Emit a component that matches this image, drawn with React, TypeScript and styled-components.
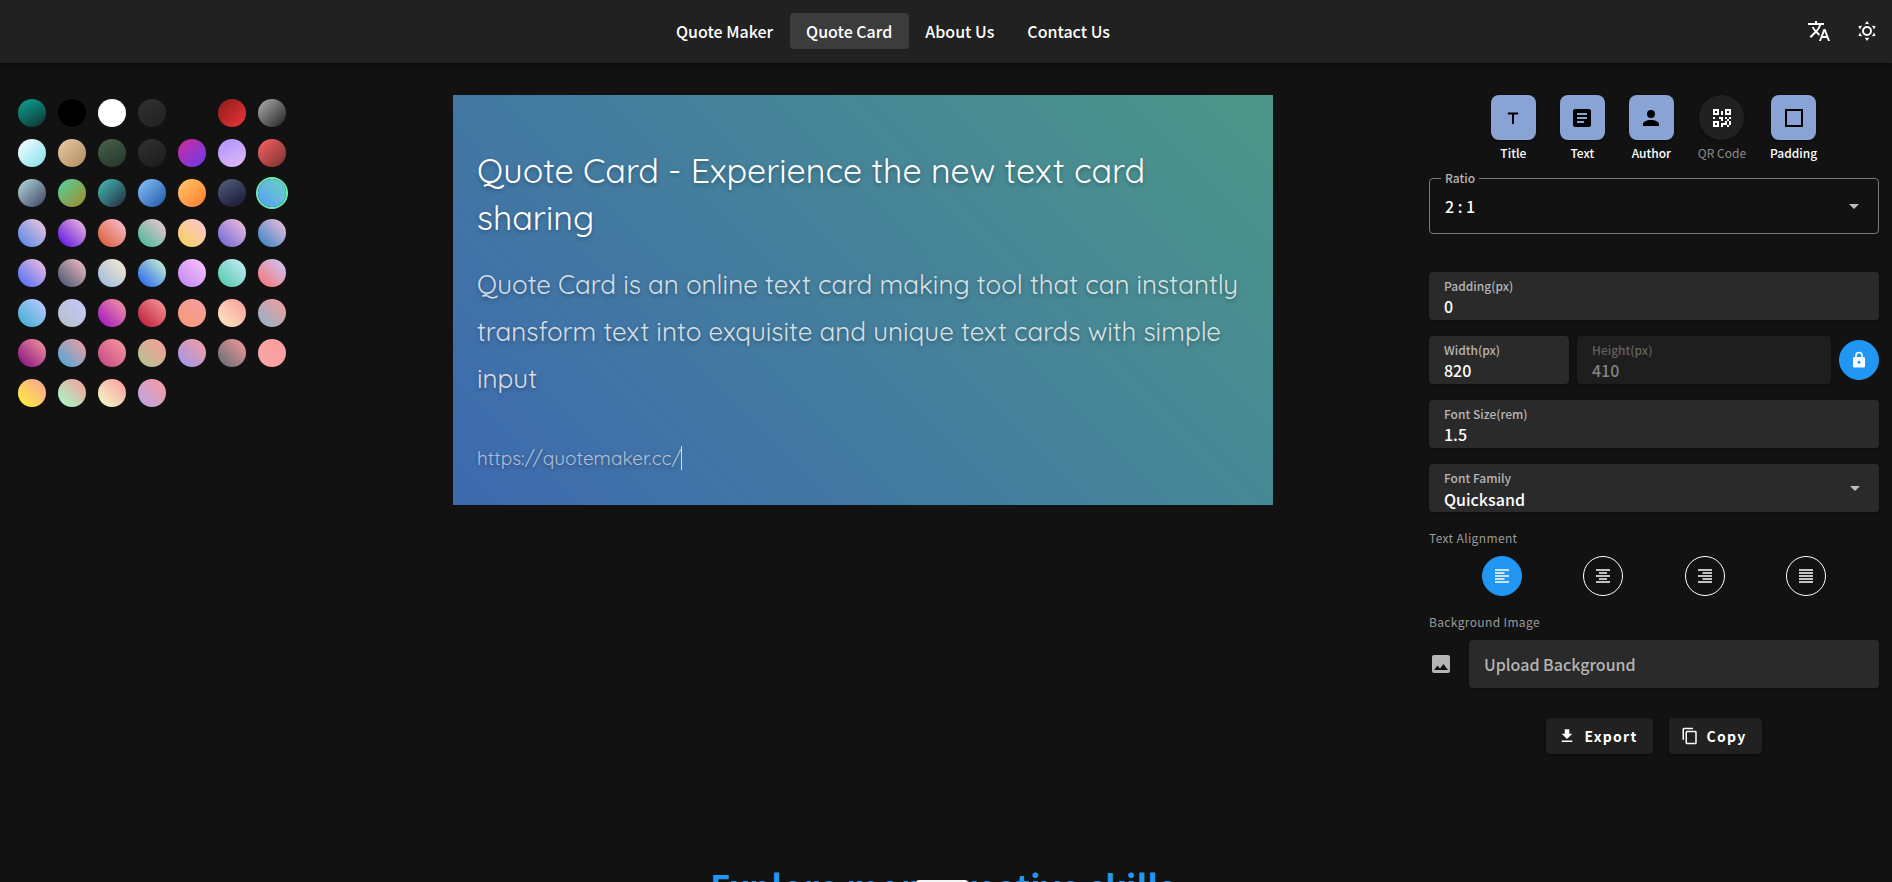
import React from "react";
import styled, { createGlobalStyle } from "styled-components";

const GlobalStyle = createGlobalStyle`
  * { box-sizing: border-box; }
  body {
    margin: 0;
    background: #121212;
    color: #fff;
    font-family: "Noto Sans CJK SC", "Noto Sans", sans-serif;
    font-size: 16px;
    font-weight: 500;
  }
  button, input, select { font: inherit; color: inherit; }
  h1, h2, p { margin: 0; }
`;

const Page = styled.div`
  height: 100vh;
  overflow: hidden;
`;

const Header = styled.header`
  position: relative;
  display: flex;
  align-items: center;
  height: 63px;
  padding-right: 1px;
  border-bottom: 1px solid #212121;
  background: #212121;
  box-shadow: 0 2px 5px rgba(0, 0, 0, 0.5);
`;

const Nav = styled.nav`
  flex: 1;
  display: flex;
  justify-content: center;
`;

const NavLink = styled.a<{ $active?: boolean }>`
  height: 36px;
  padding: 0 17px 0 16px;
  border-radius: 4px;
  line-height: 36px;
  color: #fff;
  text-decoration: none;
  background: ${(p) => (p.$active ? "#3c3c3c" : "transparent")};
`;

const HeaderActions = styled.div`
  display: flex;
  margin-left: 8px;
`;

const IconButton = styled.button`
  display: grid;
  place-items: center;
  width: 48px;
  height: 48px;
  padding: 0;
  border: 0;
  border-radius: 50%;
  background: none;
`;

const Workspace = styled.main`
  display: grid;
  grid-template-columns: 307px minmax(0, 1fr) 25%;
  align-items: start;
  padding-top: 32px;
`;

const Palette = styled.div`
  display: grid;
  grid-template-columns: repeat(7, 28px);
  gap: 12px;
  padding: 4px 0 0 18px;
`;

const Swatch = styled.button<{ $fill: string; $selected: boolean }>`
  width: 28px;
  height: 28px;
  padding: 0;
  border: 0;
  border-radius: 50%;
  background: ${(p) => p.$fill};
  box-shadow: ${(p) => (p.$selected ? "0 0 0 2px #69f0ae" : "none")};
`;

const Stage = styled.section`
  display: flex;
  justify-content: center;
`;

const Card = styled.article`
  width: 820px;
  min-height: 410px;
  padding: 52px 24px 24px;
  background: linear-gradient(45deg, #3d69b0, #4c9788);
  font-family: Quicksand, Lato, sans-serif;
  font-weight: 400;
  text-shadow: 0 2px 4px rgba(0, 0, 0, 0.3);
`;

const CardTitle = styled.h1`
  font-size: 34px;
  font-weight: 400;
  line-height: 47px;
`;

const CardText = styled.p`
  margin-top: 20px;
  font-size: 26px;
  line-height: 47px;
  color: rgba(255, 255, 255, 0.8);
`;

const CardAuthor = styled.p`
  display: flex;
  align-items: center;
  margin-top: 44px;
  font-size: 19px;
  line-height: 24px;
  color: rgba(255, 255, 255, 0.6);
`;

const TextCaret = styled.span`
  width: 1px;
  height: 24px;
  background: rgba(255, 255, 255, 0.75);
`;

const Tools = styled.aside`
  display: flex;
  flex-direction: column;
  padding: 0 13px 0 10px;
`;

const Toggles = styled.div`
  display: flex;
  justify-content: center;
  gap: 24px;
`;

const Toggle = styled.label<{ $on: boolean }>`
  display: flex;
  flex-direction: column;
  align-items: center;
  gap: 3px;
  font-size: 12px;
  font-weight: ${(p) => (p.$on ? 500 : 400)};
  line-height: 20px;
  color: ${(p) => (p.$on ? "#fff" : "#8a8a8a")};
`;

const ToggleButton = styled.button<{ $on: boolean }>`
  display: grid;
  place-items: center;
  width: 45px;
  height: 45px;
  padding: 0;
  border: 0;
  border-radius: ${(p) => (p.$on ? "8px" : "50%")};
  background: ${(p) => (p.$on ? "#89a4d4" : "#212121")};
  color: ${(p) => (p.$on ? "#000" : "#fff")};
  box-shadow: 0 1px 3px rgba(0, 0, 0, 0.4);
`;

const OutlinedField = styled.fieldset`
  position: relative;
  height: 64px;
  margin: 7px 0 38px;
  padding: 0;
  border: 1px solid #7a7a7a;
  border-radius: 4px;
`;

const Legend = styled.legend`
  margin-left: 11px;
  padding: 0 4px;
  font-size: 12px;
  line-height: 16px;
  color: #b5b5b5;
`;

const OutlinedSelect = styled.select`
  width: 100%;
  height: 40px;
  padding: 0 15px;
  border: 0;
  background: transparent;
  appearance: none;
`;

const CaretSlot = styled.span`
  position: absolute;
  right: 12px;
  top: 50%;
  display: flex;
  margin-top: -12px;
  color: #bdbdbd;
  pointer-events: none;
`;

const FieldStack = styled.div`
  display: flex;
  flex-direction: column;
  gap: 16px;
`;

const SizeRow = styled.div`
  display: grid;
  grid-template-columns: 140px 1fr 40px;
  align-items: center;
  gap: 8px;
`;

const FilledField = styled.label<{ $disabled?: boolean }>`
  position: relative;
  display: flex;
  flex-direction: column;
  height: 48px;
  padding-top: 5px;
  border-radius: 4px;
  background: ${(p) => (p.$disabled ? "#1e1e1e" : "#2a2a2a")};
  box-shadow: 0 1px 3px rgba(0, 0, 0, 0.4);
  color: ${(p) => (p.$disabled ? "#828282" : "#fff")};
`;

const FieldLabel = styled.span<{ $disabled?: boolean }>`
  padding: 0 15px;
  font-size: 12px;
  line-height: 18px;
  color: ${(p) => (p.$disabled ? "#616161" : "#b5b5b5")};
`;

const FieldInput = styled.input`
  width: 100%;
  height: 22px;
  padding: 0 15px;
  border: 0;
  outline: 0;
  background: transparent;
`;

const FieldSelect = styled.select`
  width: 100%;
  height: 22px;
  padding: 0 15px;
  border: 0;
  background: transparent;
  appearance: none;
`;

const RoundButton = styled.button<{ $on: boolean }>`
  display: grid;
  place-items: center;
  width: 40px;
  height: 40px;
  padding: 0;
  border: 1px solid ${(p) => (p.$on ? "#2196f3" : "#fff")};
  border-radius: 50%;
  background: ${(p) => (p.$on ? "#2196f3" : "transparent")};
`;

const SectionLabel = styled.div`
  margin-top: 16px;
  font-size: 12px;
  font-weight: 400;
  line-height: 20px;
  letter-spacing: 0.03em;
  color: #9a9a9a;
`;

const AlignRow = styled.div`
  display: flex;
  justify-content: space-between;
  margin-top: 8px;
  padding: 0 53px;
`;

const AlignIcon = styled.span`
  display: flex;
  color: rgba(255, 255, 255, 0.75);
`;

const UploadRow = styled.div`
  display: flex;
  align-items: center;
  gap: 16px;
  margin-top: 8px;
  color: #b5b5b5;
`;

const UploadButton = styled.button`
  flex: 1;
  height: 48px;
  padding: 0 15px;
  border: 0;
  border-radius: 4px;
  background: #2a2a2a;
  box-shadow: 0 1px 3px rgba(0, 0, 0, 0.4);
  text-align: left;
`;

const Actions = styled.div`
  display: flex;
  justify-content: center;
  gap: 16px;
  margin-top: 30px;
`;

const ActionButton = styled.button`
  display: flex;
  align-items: center;
  gap: 8px;
  height: 36px;
  padding: 0 15px 0 12px;
  border: 0;
  border-radius: 4px;
  background: #212121;
  box-shadow: 0 1px 3px rgba(0, 0, 0, 0.5);
  font-size: 14px;
  font-weight: 700;
  letter-spacing: 0.09em;
`;

const Explore = styled.section`
  padding-top: 104px;
  text-align: center;
`;

const ExploreTitle = styled.h2`
  padding-right: 6px;
  font-size: 34px;
  font-weight: 700;
  line-height: 56px;
  letter-spacing: 0.007em;
  color: #2196f3;
`;

const SheetHandle = styled.div`
  position: fixed;
  bottom: -4px;
  left: 50%;
  width: 52px;
  height: 6px;
  margin-left: -30px;
  border-radius: 4px;
  background: #f5f5f5;
`;

const paths = {
  translate:
    "M12.87,15.07L10.33,12.56L10.36,12.53C12.1,10.59 13.34,8.36 14.07,6H17V4H10V2H8V4H1V6H12.17C11.5,7.92 10.44,9.75 9,11.35C8.07,10.32 7.3,9.19 6.69,8H4.69C5.42,9.63 6.42,11.17 7.67,12.56L2.58,17.58L4,19L9,14L12.11,17.11L12.87,15.07M18.5,10H16.5L12,22H14L15.12,19H19.87L21,22H23L18.5,10M15.88,17L17.5,12.67L19.12,17H15.88Z",
  sunny:
    "M12,7A5,5 0 0,1 17,12A5,5 0 0,1 12,17A5,5 0 0,1 7,12A5,5 0 0,1 12,7M12,9A3,3 0 0,0 9,12A3,3 0 0,0 12,15A3,3 0 0,0 15,12A3,3 0 0,0 12,9M12,2L14.39,5.42C13.65,5.15 12.84,5 12,5C11.16,5 10.35,5.15 9.61,5.42L12,2M3.34,7L7.5,6.65C6.9,7.16 6.36,7.78 5.94,8.5C5.5,9.24 5.25,10 5.11,10.79L3.34,7M3.36,17L5.12,13.23C5.26,14 5.53,14.78 5.95,15.5C6.37,16.24 6.91,16.86 7.5,17.37L3.36,17M20.65,7L18.88,10.79C18.74,10 18.47,9.23 18.05,8.5C17.63,7.78 17.1,7.15 16.5,6.64L20.65,7M20.64,17L16.5,17.36C17.09,16.85 17.62,16.22 18.04,15.5C18.46,14.77 18.73,14 18.87,13.21L20.64,17M12,22L9.59,18.56C10.33,18.83 11.14,19 12,19C12.82,19 13.63,18.83 14.37,18.56L12,22Z",
  title: "M6.8,6.5H17.2V8.5H13V18H11V8.5H6.8Z",
  text: "M14,17H7V15H14M17,13H7V11H17M17,9H7V7H17M19,3H5C3.89,3 3,3.89 3,5V19A2,2 0 0,0 5,21H19A2,2 0 0,0 21,19V5C21,3.89 20.1,3 19,3Z",
  author:
    "M12,4A4,4 0 0,1 16,8A4,4 0 0,1 12,12A4,4 0 0,1 8,8A4,4 0 0,1 12,4M12,14C16.42,14 20,15.79 20,18V20H4V18C4,15.79 7.58,14 12,14Z",
  qrcode:
    "M3,11H5V13H3V11M11,5H13V9H11V5M9,11H13V15H11V13H9V11M15,11H17V13H19V11H21V13H19V15H21V19H19V21H17V19H13V21H11V17H15V15H17V13H15V11M19,19V15H17V19H19M15,3H21V9H15V3M17,5V7H19V5H17M3,3H9V9H3V3M5,5V7H7V5H5M3,15H9V21H3V15M5,17V19H7V17H5Z",
  square: "M3,3H21V21H3V3M5,5V19H19V5H5Z",
  lock: "M12,17A2,2 0 0,0 14,15C14,13.89 13.1,13 12,13A2,2 0 0,0 10,15A2,2 0 0,0 12,17M18,8A2,2 0 0,1 20,10V20A2,2 0 0,1 18,22H6A2,2 0 0,1 4,20V10C4,8.89 4.9,8 6,8H7V6A5,5 0 0,1 12,1A5,5 0 0,1 17,6V8H18M12,3A3,3 0 0,0 9,6V8H15V6A3,3 0 0,0 12,3Z",
  left: "M5,5H19V7H5ZM5,8H14.5V10H5ZM5,11H19V13H5ZM5,14H14.5V16H5ZM5,17H19V19H5Z",
  center: "M5,5H19V7H5ZM8,8H16V10H8ZM5,11H19V13H5ZM8,14H16V16H8ZM5,17H19V19H5Z",
  right: "M5,5H19V7H5ZM9.5,8H19V10H9.5ZM5,11H19V13H5ZM9.5,14H19V16H9.5ZM5,17H19V19H5Z",
  justify: "M5,5H19V7H5ZM5,8H19V10H5ZM5,11H19V13H5ZM5,14H19V16H5ZM5,17H19V19H5Z",
  image:
    "M8.5,13.5L11,16.5L14.5,12L19,18H5M21,19V5C21,3.89 20.1,3 19,3H5A2,2 0 0,0 3,5V19A2,2 0 0,0 5,21H19A2,2 0 0,0 21,19Z",
  download: "M5,20H19V18H5M19,9H15V3H9V9H5L12,16L19,9Z",
  copy: "M19,21H8V7H19M19,5H8A2,2 0 0,0 6,7V21A2,2 0 0,0 8,23H19A2,2 0 0,0 21,21V7A2,2 0 0,0 19,5M16,1H4A2,2 0 0,0 2,3V17H4V3H16V1Z",
  caret: "M7,10L12,15L17,10H7Z",
};

type IconName = keyof typeof paths;

const Icon = ({ name, size = 24 }: { name: IconName; size?: number }) => (
  <svg width={size} height={size} viewBox="0 0 24 24" fill="currentColor" aria-hidden="true">
    <path d={paths[name]} />
  </svg>
);

const g = (angle: number, from: string, to: string) => `linear-gradient(${angle}deg, ${from}, ${to})`;

const swatches = [
  g(150, "#0ba595", "#12302f"), "#000", "#fff", g(150, "#323232", "#202020"), "transparent", g(135, "#8a1a1a", "#ef3639"), g(135, "#b0b0b0", "#202020"),
  g(135, "#ffffff", "#7ddfea"), g(135, "#e8cba8", "#af8b5c"), g(150, "#4a624c", "#22352a"), g(150, "#313131", "#1b1b1b"), g(135, "#cf2c98", "#673bf0"), g(150, "#ab93fc", "#e4b9f8"), g(135, "#fd6264", "#77302f"),
  g(135, "#b4dbe0", "#3e4060"), g(135, "#53d3a0", "#a48828"), g(135, "#46bdbb", "#24283b"), g(135, "#8cc2fb", "#1d56a8"), g(135, "#ffca6c", "#ff7b2c"), g(150, "#556080", "#15152e"), g(45, "#579af9", "#6cd5c2"),
  g(45, "#4a84ec", "#fac8dc"), g(45, "#5208e0", "#fac1dd"), g(45, "#d4572a", "#fdc4da"), g(45, "#3bb797", "#fac6d2"), g(45, "#f4d24e", "#ffc5e0"), g(45, "#6464d4", "#fac1dd"), g(45, "#2c80c4", "#fac1dd"),
  g(45, "#4568fa", "#fac3dc"), g(45, "#3d506c", "#fac1c8"), g(45, "#96b7e2", "#fdeccb"), g(45, "#1a5cf0", "#d5fbd0"), g(45, "#bd82f0", "#ffc8ff"), g(45, "#4ac5a4", "#cdeeff"), g(45, "#fb706e", "#c8cbff"),
  g(45, "#35add2", "#c8caff"), g(45, "#b0c2c4", "#cac6ff"), g(45, "#9a0ec4", "#fa9e9c"), g(45, "#b81436", "#fa9e9c"), g(45, "#f89878", "#f4a0a0"), g(45, "#ffebc4", "#fa9c9c"), g(45, "#8ab4ce", "#fa9a96"),
  g(45, "#800884", "#fa9c9c"), g(45, "#42a8dc", "#fa9c9c"), g(45, "#c24186", "#fa9e9c"), g(45, "#b2c490", "#fa9c98"), g(45, "#9a98f0", "#fa9c9c"), g(45, "#5c6a70", "#fa9c9c"), g(45, "#f8a8a8", "#fa9c9c"),
  g(45, "#fff736", "#fa9c9c"), g(45, "#a0ffcc", "#fa9a98"), g(45, "#f2ffcc", "#fa9a9c"), g(45, "#b8a6e8", "#fa9a9c"),
];

const toggles: { label: string; icon: IconName; on: boolean }[] = [
  { label: "Title", icon: "title", on: true },
  { label: "Text", icon: "text", on: true },
  { label: "Author", icon: "author", on: true },
  { label: "QR Code", icon: "qrcode", on: false },
  { label: "Padding", icon: "square", on: true },
];

const navItems = ["Quote Maker", "Quote Card", "About Us", "Contact Us"];
const alignments: IconName[] = ["left", "center", "right", "justify"];

export default function App() {
  const [selected, setSelected] = React.useState(20);
  const [align, setAlign] = React.useState<IconName>("left");

  return (
    <Page>
      <GlobalStyle />
      <Header>
        <Nav>
          {navItems.map((item) => (
            <NavLink key={item} href="#" $active={item === "Quote Card"}>{item}</NavLink>
          ))}
        </Nav>
        <HeaderActions>
          <IconButton aria-label="Language"><Icon name="translate" /></IconButton>
          <IconButton aria-label="Theme"><Icon name="sunny" /></IconButton>
        </HeaderActions>
      </Header>

      <Workspace>
        <Palette>
          {swatches.map((fill, i) => (
            <Swatch key={i} $fill={fill} $selected={i === selected} aria-label={`Background ${i + 1}`} onClick={() => setSelected(i)} />
          ))}
        </Palette>

        <Stage>
          <Card>
            <CardTitle>Quote Card - Experience the new text card sharing</CardTitle>
            <CardText>
              Quote Card is an online text card making tool that can instantly transform text into exquisite and unique text cards with simple input
            </CardText>
            <CardAuthor>https://quotemaker.cc/<TextCaret /></CardAuthor>
          </Card>
        </Stage>

        <Tools>
          <Toggles>
            {toggles.map((t) => (
              <Toggle key={t.label} $on={t.on}>
                <ToggleButton $on={t.on} aria-pressed={t.on}><Icon name={t.icon} /></ToggleButton>
                {t.label}
              </Toggle>
            ))}
          </Toggles>

          <OutlinedField>
            <Legend>Ratio</Legend>
            <OutlinedSelect aria-label="Ratio"><option>2 : 1</option></OutlinedSelect>
            <CaretSlot><Icon name="caret" /></CaretSlot>
          </OutlinedField>

          <FieldStack>
            <FilledField>
              <FieldLabel>Padding(px)</FieldLabel>
              <FieldInput defaultValue="0" />
            </FilledField>
            <SizeRow>
              <FilledField>
                <FieldLabel>Width(px)</FieldLabel>
                <FieldInput defaultValue="820" />
              </FilledField>
              <FilledField $disabled>
                <FieldLabel $disabled>Height(px)</FieldLabel>
                <FieldInput defaultValue="410" disabled />
              </FilledField>
              <RoundButton $on aria-label="Lock ratio"><Icon name="lock" size={18} /></RoundButton>
            </SizeRow>
            <FilledField>
              <FieldLabel>Font Size(rem)</FieldLabel>
              <FieldInput defaultValue="1.5" />
            </FilledField>
            <FilledField>
              <FieldLabel>Font Family</FieldLabel>
              <FieldSelect><option>Quicksand</option></FieldSelect>
              <CaretSlot><Icon name="caret" /></CaretSlot>
            </FilledField>
          </FieldStack>

          <SectionLabel>Text Alignment</SectionLabel>
          <AlignRow>
            {alignments.map((a) => (
              <RoundButton key={a} $on={a === align} aria-label={`Align ${a}`} onClick={() => setAlign(a)}>
                <AlignIcon><Icon name={a} /></AlignIcon>
              </RoundButton>
            ))}
          </AlignRow>

          <SectionLabel>Background Image</SectionLabel>
          <UploadRow>
            <Icon name="image" />
            <UploadButton>Upload Background</UploadButton>
          </UploadRow>

          <Actions>
            <ActionButton><Icon name="download" size={18} />Export</ActionButton>
            <ActionButton><Icon name="copy" size={18} />Copy</ActionButton>
          </Actions>
        </Tools>
      </Workspace>

      <Explore>
        <ExploreTitle>Explore more creative skills</ExploreTitle>
      </Explore>
      <SheetHandle />
    </Page>
  );
}
